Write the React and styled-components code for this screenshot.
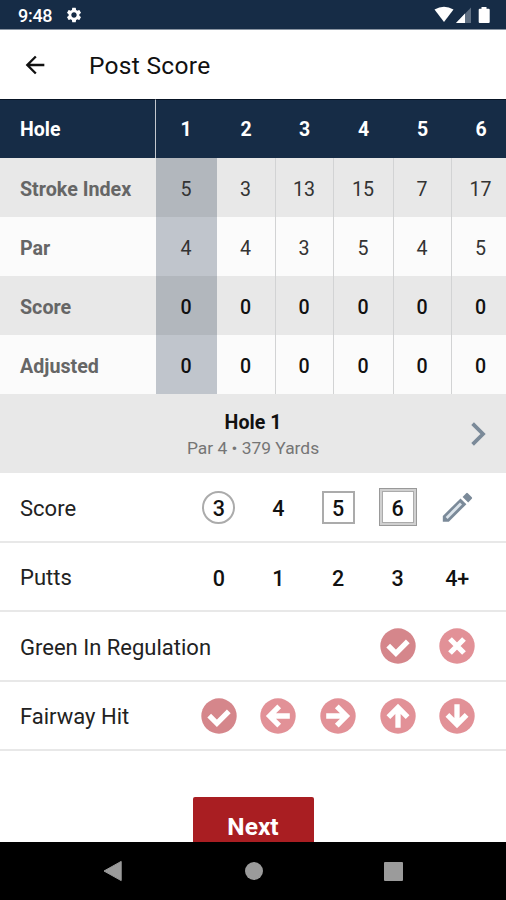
import { Fragment } from 'react';
import styled, { createGlobalStyle } from 'styled-components';
import { MdSettings, MdArrowBack } from 'react-icons/md';

const holes = [1, 2, 3, 4, 5, 6];

const rows = [
    { label: 'Stroke Index', values: [5, 3, 13, 15, 7, 17] },
    { label: 'Par', values: [4, 4, 3, 5, 4, 5] },
    { label: 'Score', values: [0, 0, 0, 0, 0, 0], bold: true },
    { label: 'Adjusted', values: [0, 0, 0, 0, 0, 0], bold: true }
];

const arrowAngles = { left: 0, up: 90, right: 180, down: 270 };

function StatusIcons() {
    return (
        <svg width="58" height="18" viewBox="0 0 58 18">
            <path d="M0.5 3.6 Q10 -2 19.5 3.6 L10 16 Z" fill="#fff" />
            <path d="M37 1.5 V17 H22 Z" fill="#5f6f82" />
            <path d="M31 7.5 V17 H22 Z" fill="#fff" />
            <path d="M47.5 1 h5 v1.8 h2.2 q1 0 1 1 v12.2 q0 1 -1 1 h-9 q-1 0 -1 -1 v-12.2 q0 -1 1 -1 h1.8 z" fill="#fff" />
        </svg>
    );
}

function Pencil() {
    return (
        <svg width="31" height="31" viewBox="0 0 31 31">
            <path d="M20.6 4.9 L24.2 1.2 Q25 0.4 25.8 1.2 L29.8 5.2 Q30.6 6 29.8 6.8 L26.2 10.4 Z" fill="#7b8a99" />
            <path d="M0.8 29.7 V23.9 L18.5 6.4 L24.4 12.2 L6.8 29.7 Z" fill="#7b8a99" />
            <path d="M4.6 25.9 L19 11.6" stroke="#dde5ec" strokeWidth="2.8" />
        </svg>
    );
}

function CircleCheck() {
    return (
        <svg width="36" height="36" viewBox="-18 -18 36 36">
            <circle r="17.7" fill="#d5868b" />
            <Mark d="M-9.8 -0.3 L-2.1 7.3 L9.8 -4.6" />
        </svg>
    );
}

function CircleCross() {
    return (
        <svg width="36" height="36" viewBox="-18 -18 36 36">
            <circle r="17.7" fill="#e29197" />
            <Mark d="M-7 -7 L7 7 M7 -7 L-7 7" />
        </svg>
    );
}

function CircleArrow({ to }) {
    return (
        <svg width="36" height="36" viewBox="-18 -18 36 36">
            <circle r="17.7" fill="#e29197" />
            <g transform={`rotate(${arrowAngles[to]})`}>
                <Mark d="M1.2 -9.6 L-8.4 0 L1.2 9.6 M-7 0 H11.8" />
            </g>
        </svg>
    );
}

function App() {
    return (
        <>
            <GlobalStyle />
            <Screen>
                <StatusBar>
                    <Clock>9:48</Clock>
                    <MdSettings size={18} />
                    <StatusRight>
                        <StatusIcons />
                    </StatusRight>
                </StatusBar>
                <AppBar>
                    <MdArrowBack size={28} />
                    <h1>Post Score</h1>
                </AppBar>
                <ScoreTable>
                    <HeadLabel>Hole</HeadLabel>
                    {holes.map((hole) => (
                        <HeadCell key={hole}>{hole}</HeadCell>
                    ))}
                    {rows.map((row, i) => (
                        <Fragment key={row.label}>
                            <RowLabel $shade={i % 2 === 0}>{row.label}</RowLabel>
                            {row.values.map((value, j) => (
                                <Cell key={j} $shade={i % 2 === 0} $active={j === 0} $bold={row.bold}>
                                    {value}
                                </Cell>
                            ))}
                        </Fragment>
                    ))}
                </ScoreTable>
                <HoleBar>
                    <h2>Hole 1</h2>
                    <p>Par 4 • 379 Yards</p>
                    <NextHole>
                        <svg width="15" height="24" viewBox="0 0 15 24">
                            <path d="M1.6 1.6 L12 12 L1.6 22.4" fill="none" stroke="#7b8a99" strokeWidth="3.8" />
                        </svg>
                    </NextHole>
                </HoleBar>
                <Entry>
                    <EntryLabel>Score</EntryLabel>
                    <Option><Ring>3</Ring></Option>
                    <Option $text>4</Option>
                    <Option><Box>5</Box></Option>
                    <Option><DoubleBox><Box $inner>6</Box></DoubleBox></Option>
                    <Option><Pencil /></Option>
                </Entry>
                <Entry>
                    <EntryLabel>Putts</EntryLabel>
                    <Option $text>0</Option>
                    <Option $text>1</Option>
                    <Option $text>2</Option>
                    <Option $text>3</Option>
                    <Option $text>4+</Option>
                </Entry>
                <Entry>
                    <EntryLabel>Green In Regulation</EntryLabel>
                    <Option><CircleCheck /></Option>
                    <Option><CircleCross /></Option>
                </Entry>
                <Entry>
                    <EntryLabel>Fairway Hit</EntryLabel>
                    <Option><CircleCheck /></Option>
                    <Option><CircleArrow to="left" /></Option>
                    <Option><CircleArrow to="right" /></Option>
                    <Option><CircleArrow to="up" /></Option>
                    <Option><CircleArrow to="down" /></Option>
                </Entry>
                <Footer>
                    <NextButton>Next</NextButton>
                </Footer>
                <NavBar>
                    <svg width="20" height="22" viewBox="0 0 20 22">
                        <path d="M18.2 1.4 V20.6 L1 11 Z" fill="#9b9b9b" stroke="#9b9b9b" strokeLinejoin="round" />
                    </svg>
                    <HomeDot />
                    <RecentSquare />
                </NavBar>
            </Screen>
        </>
    );
}

export default App;

const GlobalStyle = createGlobalStyle`
    * {
        box-sizing: border-box;
    }

    body {
        margin: 0;
        background: #fff;
        font-family: Roboto, "Liberation Sans", sans-serif;
    }

    h1, h2, p {
        margin: 0;
    }

    svg {
        display: block;
        flex-shrink: 0;
    }
`

const Screen = styled.div`
    width: 506px;
    height: 900px;
    overflow: hidden;
    display: flex;
    flex-direction: column;
    background: #fff;
`

const StatusBar = styled.div`
    height: 30px;
    flex-shrink: 0;
    padding: 1px 14px 0 18px;
    display: flex;
    align-items: center;
    color: #fff;
    background: #162c46;
    border-bottom: 1px solid #8a95a2;
`

const Clock = styled.span`
    width: 47px;
    padding-top: 1px;
    font-size: 18px;
    font-weight: 500;
    letter-spacing: -0.3px;
`

const StatusRight = styled.div`
    margin-left: auto;
`

const AppBar = styled.div`
    height: 69px;
    flex-shrink: 0;
    padding: 1px 0 0 21px;
    display: flex;
    align-items: center;
    gap: 40px;
    color: #111;

    h1 {
        font-size: 24.5px;
        font-weight: 400;
        letter-spacing: 0.3px;
    }
`

const ScoreTable = styled.div`
    display: grid;
    flex-shrink: 0;
    grid-template-columns: 156px 61px 59px 58px 60px 58px 59px;
    grid-template-rows: repeat(5, 59px);
    width: 506px;
    overflow: hidden;
`

const HeadLabel = styled.div`
    padding-left: 20px;
    display: flex;
    align-items: center;
    font-size: 19.5px;
    font-weight: 700;
    color: #fff;
    background: #162c46;
    border-top: 1px solid #081424;
    border-right: 1px solid #c3c8ce;
`

const HeadCell = styled.div`
    padding-right: 1px;
    display: flex;
    align-items: center;
    justify-content: center;
    font-size: 19.5px;
    font-weight: 700;
    color: #fff;
    background: #162c46;
    border-top: 1px solid #081424;
`

const RowLabel = styled.div`
    padding: 3px 0 0 20px;
    display: flex;
    align-items: center;
    font-size: 19.7px;
    font-weight: 700;
    color: #666;
    background: ${(p) => (p.$shade ? '#e8e8e8' : '#fbfbfb')};
`

const Cell = styled.div`
    padding: 3px 1px 0 0;
    display: flex;
    align-items: center;
    justify-content: center;
    font-size: 19.6px;
    font-weight: ${(p) => (p.$bold ? 500 : 400)};
    color: ${(p) => (p.$bold ? '#111' : '#333')};
    background: ${(p) => (p.$shade ? '#e8e8e8' : '#fbfbfb')};
    border-right: 1px solid #d2d3d4;

    ${(p) => p.$active && `
        background: ${p.$shade ? '#b2b7bd' : '#c0c5cc'};
        border-right: none;
    `}
`

const HoleBar = styled.div`
    position: relative;
    height: 79px;
    flex-shrink: 0;
    padding-top: 3px;
    display: flex;
    flex-direction: column;
    align-items: center;
    justify-content: center;
    gap: 3px;
    background: #e8e8e8;

    h2 {
        font-size: 19.6px;
        line-height: 23px;
        font-weight: 700;
        color: #111;
    }

    p {
        font-size: 17.4px;
        line-height: 22px;
        color: #757575;
    }
`

const NextHole = styled.div`
    position: absolute;
    right: 20.5px;
    top: 28px;
`

const Entry = styled.div`
    height: 69.5px;
    flex-shrink: 0;
    padding: 1px 19px 0 20px;
    display: flex;
    align-items: center;
    border-bottom: 2px solid #e8e8e8;
`

const EntryLabel = styled.div`
    flex: 1;
    padding-top: 2px;
    font-size: 22px;
    color: #222;
`

const Option = styled.div`
    width: 59.6px;
    padding-top: ${(p) => (p.$text ? 3 : 0)}px;
    display: flex;
    align-items: center;
    justify-content: center;
    font-size: 21.5px;
    font-weight: 500;
    color: #111;
`

const Mark = styled.path`
    fill: none;
    stroke: #fff;
    stroke-width: 5.3px;
`

const Ring = styled.div`
    width: 33px;
    height: 33px;
    display: flex;
    align-items: center;
    justify-content: center;
    padding-top: 2px;
    border: 2px solid #ababab;
    border-radius: 50%;
`

const Box = styled(Ring)`
    width: ${(p) => (p.$inner ? 32 : 33)}px;
    height: ${(p) => (p.$inner ? 32 : 33)}px;
    border-width: ${(p) => (p.$inner ? 1 : 2)}px;
    border-radius: 0;
    background: #fff;
`

const DoubleBox = styled.div`
    padding: 2px;
    border: 1px solid #999;
    background: #d0d0d0;
`

const Footer = styled.div`
    flex: 1;
    min-height: 0;
    overflow: hidden;
    display: flex;
    justify-content: center;
    align-items: flex-start;
    padding-top: 46px;
`

const NextButton = styled.button`
    width: 121px;
    height: 59px;
    flex-shrink: 0;
    padding: 0 0 1px;
    border: none;
    border-radius: 2px;
    background: #a91e22;
    color: #fff;
    font-family: inherit;
    font-size: 24.5px;
    font-weight: 700;
`

const NavBar = styled.div`
    height: 58px;
    flex-shrink: 0;
    padding: 0 103px;
    display: flex;
    align-items: center;
    justify-content: space-between;
    background: #000;
`

const HomeDot = styled.div`
    width: 18px;
    height: 18px;
    border-radius: 50%;
    background: #9b9b9b;
`

const RecentSquare = styled.div`
    width: 19px;
    height: 19px;
    border-radius: 1px;
    background: #9b9b9b;
`
